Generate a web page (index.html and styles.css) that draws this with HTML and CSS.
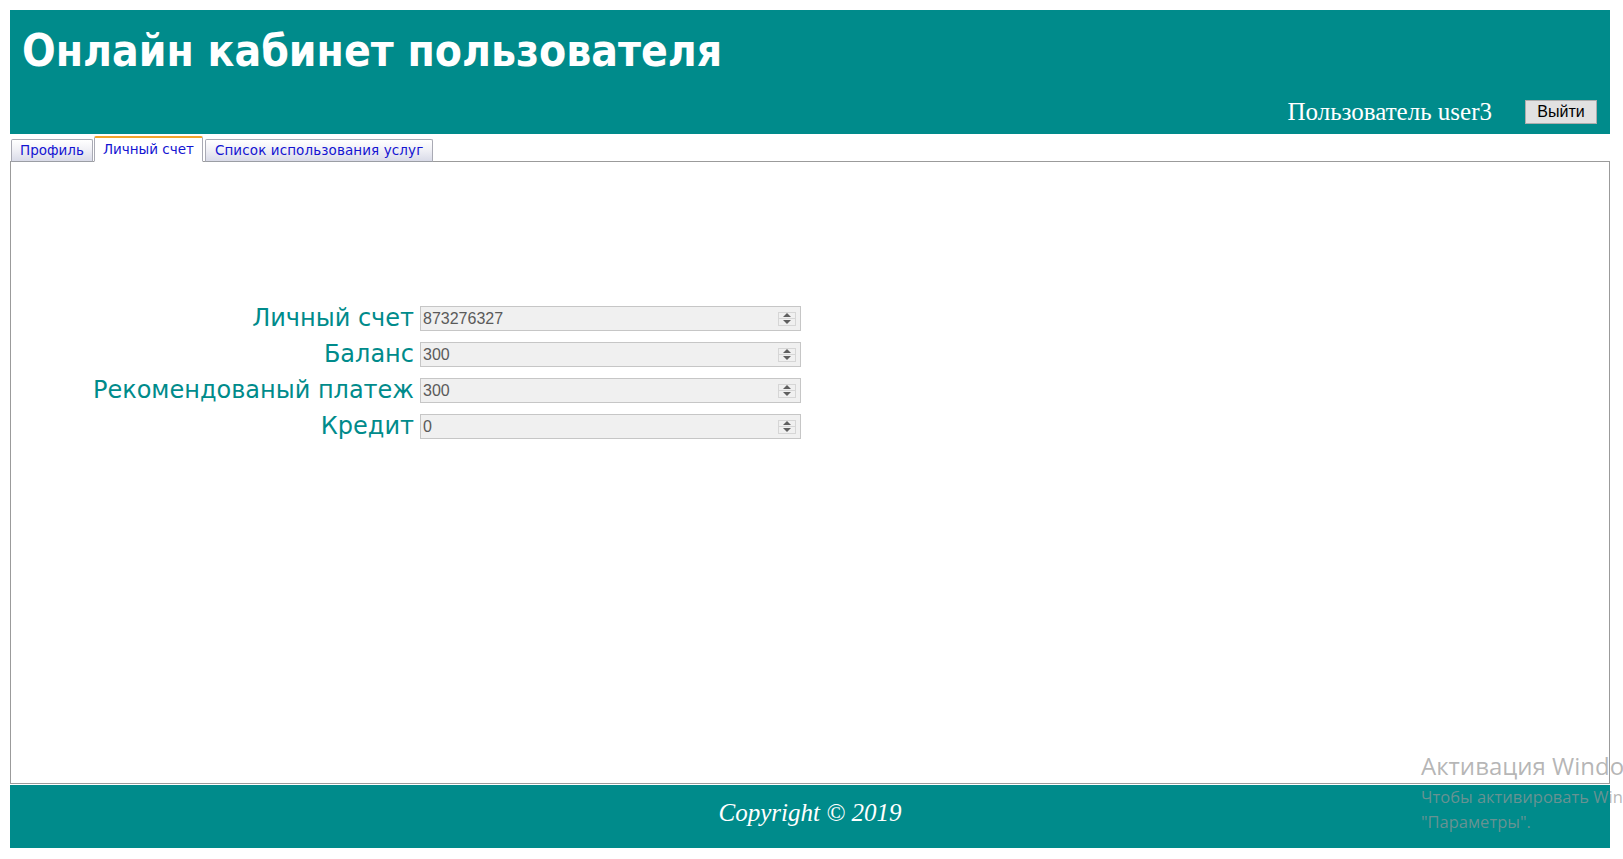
FILE: index.html
```html
<!DOCTYPE html>
<html lang="ru">
<head>
<meta charset="utf-8">
<title>Онлайн кабинет пользователя</title>
<link rel="stylesheet" href="styles.css">
</head>
<body>
<header class="header">
  <h1 class="title">Онлайн кабинет пользователя</h1>
  <div class="userbar">
    <span class="username">Пользователь user3</span>
    <button class="logout" type="button">Выйти</button>
  </div>
</header>

<nav class="tabs">
  <a class="tab" href="#">Профиль</a>
  <a class="tab tab-active" href="#">Личный счет</a>
  <a class="tab tab-wide" href="#">Список использования услуг</a>
</nav>

<main class="panel">
  <div class="form">
    <label class="label">Личный счет</label>
    <div class="field"><input class="field-input" type="text" value="873276327" disabled><span class="spin"><span class="spin-up"></span><span class="spin-down"></span></span></div>
    <label class="label">Баланс</label>
    <div class="field"><input class="field-input" type="text" value="300" disabled><span class="spin"><span class="spin-up"></span><span class="spin-down"></span></span></div>
    <label class="label">Рекомендованый платеж</label>
    <div class="field"><input class="field-input" type="text" value="300" disabled><span class="spin"><span class="spin-up"></span><span class="spin-down"></span></span></div>
    <label class="label">Кредит</label>
    <div class="field"><input class="field-input" type="text" value="0" disabled><span class="spin"><span class="spin-up"></span><span class="spin-down"></span></span></div>
  </div>
</main>

<footer class="footer">Copyright © 2019</footer>

<div class="watermark">
  <div class="wm-title">Активация Windows</div>
  <div class="wm-text">Чтобы активировать Windows, перейдите в раздел<br>"Параметры".</div>
</div>
</body>
</html>
```

FILE: styles.css
```css
html, body {
  margin: 0;
  padding: 0;
  background: #ffffff;
}
body {
  padding: 10px 13px 0 10px;
  overflow: hidden;
  position: relative;
  height: 859px;
  box-sizing: border-box;
}

.header {
  background: #008b8b;
  height: 124px;
  box-sizing: border-box;
  padding: 14px 13px 0 12px;
  display: flex;
  flex-direction: column;
}
.title {
  margin: 0;
  color: #ffffff;
  font-family: "DejaVu Sans Condensed", "DejaVu Sans", sans-serif;
  font-weight: bold;
  font-size: 44px;
  line-height: 54px;
}
.userbar {
  display: flex;
  justify-content: flex-end;
  align-items: center;
  gap: 33px;
  margin-top: 20px;
}
.username {
  color: #ffffff;
  font-family: "Liberation Serif", serif;
  font-size: 25px;
  line-height: 28px;
}
.logout {
  width: 72px;
  height: 24px;
  padding: 0;
  background: #e1e1e1;
  border: 1px solid #adadad;
  font-family: "Liberation Sans", sans-serif;
  font-size: 16px;
  color: #000000;
}

.tabs {
  display: flex;
  align-items: flex-end;
  gap: 1px;
  height: 26px;
  margin-top: 2px;
  padding-left: 1px;
  position: relative;
  z-index: 1;
  margin-bottom: -1px;
}
.tab {
  display: block;
  height: 23px;
  box-sizing: border-box;
  padding: 0 8px;
  border: 1px solid #a9aab4;
  border-bottom-color: #9b9ea4;
  border-radius: 2px 2px 0 0;
  background: linear-gradient(#ffffff 0%, #f1f1f6 45%, #d9dbe8 100%);
  color: #1414d2;
  text-decoration: none;
  font-family: "DejaVu Sans", sans-serif;
  font-size: 13.5px;
  line-height: 21px;
}
.tab-active {
  height: 26px;
  background: #ffffff;
  border-top: 2px solid #f4a42c;
  border-bottom: 1px solid #ffffff;
  line-height: 23px;
}
.tab-wide {
  margin-left: 1px;
  padding: 0 9px 0 9px;
  letter-spacing: 0.1px;
}

.panel {
  border: 1px solid #9b9b9b;
  height: 623px;
  box-sizing: border-box;
}
.form {
  display: grid;
  grid-template-columns: 323px 381px;
  column-gap: 6px;
  row-gap: 11px;
  margin: 144px 0 0 80px;
}
.label {
  text-align: right;
  color: #008b8b;
  font-family: "DejaVu Sans", sans-serif;
  font-size: 24px;
  line-height: 25px;
  white-space: nowrap;
}
.field {
  display: flex;
  align-items: center;
  height: 25px;
  box-sizing: border-box;
  border: 1px solid #c6c6c6;
  background: #f0f0f0;
  padding: 0 4px 0 2px;
}
.field-input {
  flex: 1;
  min-width: 0;
  border: 0;
  padding: 0;
  margin: 0;
  background: transparent;
  font-family: "Liberation Sans", sans-serif;
  font-size: 16px;
  color: #5a5a5a;
  -webkit-text-fill-color: #5a5a5a;
  opacity: 1;
}
.spin {
  display: flex;
  flex-direction: column;
  width: 18px;
  height: 14px;
  box-sizing: border-box;
  border: 1px solid #d6d6d6;
}
.spin-up, .spin-down {
  flex: 1;
  display: flex;
  justify-content: center;
  align-items: center;
}
.spin-up {
  border-bottom: 1px solid #d6d6d6;
}
.spin-up::before {
  content: "";
  border-left: 4px solid transparent;
  border-right: 4px solid transparent;
  border-bottom: 4px solid #606060;
}
.spin-down::before {
  content: "";
  border-left: 4px solid transparent;
  border-right: 4px solid transparent;
  border-top: 4px solid #606060;
}

.footer {
  margin-top: 1px;
  height: 63px;
  background: #008b8b;
  color: #ffffff;
  font-family: "Liberation Serif", serif;
  font-style: italic;
  font-size: 25px;
  display: flex;
  justify-content: center;
  align-items: center;
  padding-bottom: 7px;
  box-sizing: border-box;
}

.watermark {
  position: absolute;
  left: 1421px;
  top: 750px;
  white-space: nowrap;
  font-family: "Open Sans", "Noto Sans", sans-serif;
  color: rgba(150, 150, 150, 0.7);
  pointer-events: none;
}
.wm-title {
  font-size: 24px;
  line-height: 32px;
}
.wm-text {
  font-size: 16.5px;
  line-height: 25px;
  margin-top: 2px;
}
```
